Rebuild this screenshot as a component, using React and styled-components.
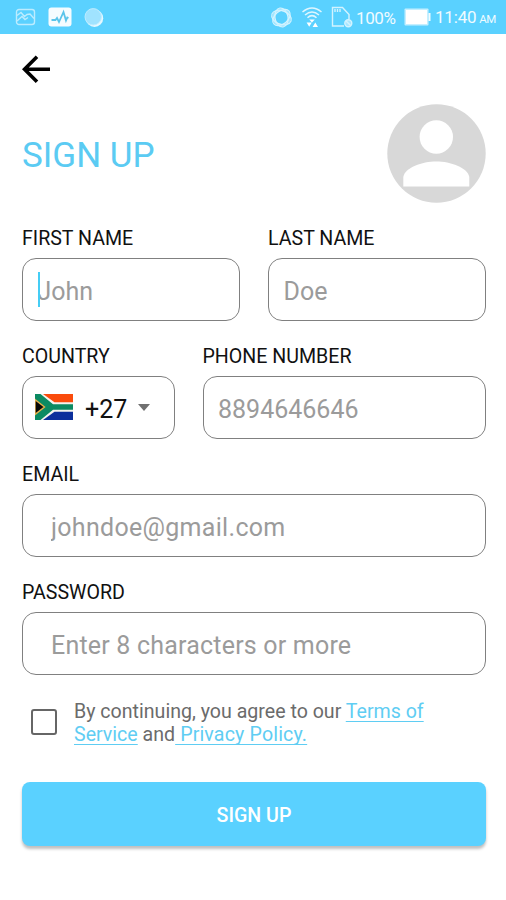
import React, {useState} from "react";
import styled, {createGlobalStyle} from "styled-components";

const GlobalStyle = createGlobalStyle`
  * {
    box-sizing: border-box;
  }

  body {
    margin: 0;
    background-color: #fff;
    font-family: Roboto, "Liberation Sans", sans-serif;
  }
`;

const Screen = styled.div`
  width: 506px;
  height: 900px;
  background-color: #fff;
  overflow: hidden;
`;

const StatusBar = styled.div`
  height: 34px;
  padding: 0 9px 0 15px;
  display: flex;
  align-items: center;
  justify-content: space-between;
  background-color: #5ad1ff;
  color: #f0fbff;
`;

const StatusGroup = styled.div`
  display: flex;
  align-items: center;
  gap: ${({$gap}) => $gap || 0}px;

  svg {
    display: block;
    flex: none;
  }
`;

const StatusText = styled.span`
  width: ${({$width}) => $width}px;
  margin-left: ${({$left}) => $left || 0}px;
  padding-top: 2px;
  font-size: 17px;
  line-height: 32px;
  letter-spacing: ${({$spacing}) => $spacing || 0}px;
  white-space: nowrap;
`;

const Meridiem = styled.span`
  font-size: 11.5px;
  margin-left: 3px;
  letter-spacing: -0.6px;
`;

const Page = styled.div`
  padding: 19px 20px 0 22px;
`;

const BackButton = styled.button`
  display: block;
  width: 32px;
  height: 32px;
  padding: 0;
  border: none;
  background: none;
  cursor: pointer;
`;

const Header = styled.div`
  display: flex;
  align-items: center;
  justify-content: space-between;
  height: 99px;
  margin-top: 19px;
`;

const Title = styled.h1`
  margin: 5px 0 0;
  color: #5bcbf3;
  font-size: 35px;
  font-weight: 400;
  line-height: 42px;
`;

const Form = styled.form`
  margin-top: 24px;
`;

const Row = styled.div`
  display: flex;
  gap: 28px;
`;

const Field = styled.div`
  width: ${({$width}) => $width || 464}px;
  height: 118.1px;
`;

const Label = styled.label`
  display: block;
  height: 31px;
  color: #111;
  font-size: 19.6px;
  line-height: 24px;
  white-space: nowrap;
`;

const Box = styled.div`
  position: relative;
  display: flex;
  align-items: center;
  height: 63px;
  padding: 0 ${({$pad}) => $pad || 14.5}px;
  border: 1px solid #808080;
  border-radius: 14px;
`;

const Input = styled.input`
  width: 100%;
  padding: 3px 0 0;
  border: none;
  outline: none;
  background: transparent;
  color: #111;
  font-family: inherit;
  font-size: 25px;
  letter-spacing: ${({$spacing}) => $spacing || 0}px;

  &::placeholder {
    color: #9b9b9b;
    opacity: 1;
  }
`;

const Caret = styled.span`
  position: absolute;
  left: 15px;
  top: 13px;
  width: 2px;
  height: 35px;
  background-color: #45cdf5;
`;

const DialCode = styled.span`
  margin-left: 12px;
  padding-top: 3px;
  color: #111;
  font-size: 25px;
`;

const DropArrow = styled.span`
  margin: 0 0 0 11px;
  border-left: 6.5px solid transparent;
  border-right: 6.5px solid transparent;
  border-top: 7px solid #707070;
`;

const Consent = styled.div`
  display: flex;
  align-items: center;
  height: 50px;
  margin-top: -2px;
  padding-left: 9px;
`;

const CheckBox = styled.button`
  flex: none;
  width: 26px;
  height: 26px;
  margin-top: -1px;
  padding: 0;
  border: 2px solid #666;
  border-radius: 3px;
  background-color: ${({$checked}) => ($checked ? "#5ad1ff" : "#fff")};
  cursor: pointer;
`;

const ConsentText = styled.p`
  margin: 2px 0 0 17px;
  color: #6b6b6b;
  font-size: 19.6px;
  line-height: 23px;
  white-space: nowrap;
`;

const Link = styled.a`
  color: #5fcdf3;
  text-decoration: underline;
  text-decoration-thickness: 1px;
  text-underline-offset: 3px;
  text-decoration-skip-ink: none;
  letter-spacing: ${({$spacing}) => $spacing || 0}px;
  white-space: pre;
`;

const SubmitButton = styled.button`
  display: block;
  width: 464px;
  height: 64px;
  margin-top: 34.3px;
  padding: 3px 0 0;
  border: none;
  border-radius: 8px;
  background-color: #5ad1ff;
  color: #fff;
  font-family: inherit;
  font-size: 19.6px;
  font-weight: 500;
  box-shadow: 0 3px 3px rgba(0, 0, 0, 0.25);
  cursor: pointer;
`;

const PictureIcon = () => (
    <svg width="21" height="18" viewBox="0 0 21 18" fill="none" stroke="#bcecff" strokeWidth="1.4">
        <rect x="1.5" y="1.5" width="18" height="15" rx="2.5"/>
        <path d="M2 7.5 L6 4.5 L9.5 8.5 L12 6.5 L15 6 L19 10.5 M2 13 L7 8.5 L10 11.5 L13 9.5"/>
    </svg>
);

const PulseIcon = () => (
    <svg width="24" height="20" viewBox="0 0 24 20">
        <rect x="0.5" y="0.5" width="23" height="19" rx="3" fill="#f5fcff"/>
        <path d="M3.5 13 H7.5 L9 11 L11 15 L15.5 5 L18 13.5 L19.3 10.5 L20.5 11" fill="none" stroke="#5ac4ea" strokeWidth="1.8"/>
    </svg>
);

const BubbleIcon = () => (
    <svg width="21" height="21" viewBox="0 0 21 21">
        <circle cx="10.5" cy="11.2" r="8.7" fill="#e6f8ff"/>
        <circle cx="9.2" cy="9.8" r="8.2" fill="#a0e3ff" stroke="#bdecff" strokeWidth="1"/>
    </svg>
);

const RingIcon = () => (
    <svg width="23" height="21" viewBox="0 0 23 21" fill="none" stroke="#d3f3ff" strokeWidth="1.1">
        <ellipse cx="11.5" cy="10.5" rx="10.2" ry="6.8" transform="rotate(20 11.5 10.5)"/>
        <ellipse cx="11.5" cy="10.5" rx="10" ry="6.5" transform="rotate(-40 11.5 10.5)"/>
        <ellipse cx="11.5" cy="10.5" rx="9.6" ry="6.5" transform="rotate(80 11.5 10.5)"/>
        <circle cx="11.5" cy="10.5" r="7.9" strokeWidth="3.2" opacity="0.6"/>
    </svg>
);

const WifiIcon = () => (
    <svg width="22" height="22" viewBox="0 0 22 22" fill="none" stroke="#dff6ff" strokeWidth="1.5">
        <path d="M1.5 6 Q11 -2 20.5 6"/>
        <path d="M4 9 Q11 3 18 9"/>
        <path d="M6.5 11.7 Q11 7.5 15.5 11.7"/>
        <path d="M8.2 13.5 H13.8 L11 16.5 Z" fill="#fff" stroke="none"/>
        <path d="M5.6 16.5 H10.8 L8.2 20.8 Z M11.6 21 L14.3 16.5 L17 21 Z" fill="#fff" stroke="none"/>
    </svg>
);

const SimIcon = () => (
    <svg width="22" height="22" viewBox="0 0 22 22" fill="none" stroke="#d3f3ff" strokeWidth="1.4">
        <path d="M13 20 H1.5 V1.5 H11.5 L18 8.5 V13"/>
        <path d="M4 3 V6 M6.5 3 V6 M9 3 V6"/>
        <circle cx="17.3" cy="17.3" r="3.5" fill="#a9e6ff"/>
        <path d="M15 15 L19.6 19.6"/>
    </svg>
);

const BatteryIcon = () => (
    <svg width="27" height="18" viewBox="0 0 27 18">
        <rect x="0.5" y="0.5" width="24" height="17" rx="1" fill="#c5efff"/>
        <rect x="2" y="2" width="21" height="14" fill="#fff"/>
        <rect x="24.5" y="5" width="2" height="8" fill="#f2fbff"/>
    </svg>
);

const BackIcon = () => (
    <svg width="32" height="32" viewBox="0 0 32 32" fill="none" stroke="#000" strokeWidth="3.6">
        <path d="M28 16.3 H3 M15 3.8 L2.5 16.3 L15 28.8"/>
    </svg>
);

const Avatar = () => (
    <svg width="99" height="99" viewBox="0 0 99 99">
        <circle cx="49.5" cy="49.5" r="49.2" fill="#d8d8d8"/>
        <circle cx="49.3" cy="33" r="16.7" fill="#fff"/>
        <path d="M16.3 82.5 V73 C18 63.5 35 57.5 49.3 57.5 C63.5 57.5 80.5 63.5 82.3 73 V82.5 Z" fill="#fff"/>
    </svg>
);

const FlagSvg = styled.svg`
  flex: none;
  margin-bottom: 2px;
`;

const Flag = () => (
    <FlagSvg width="38" height="26" viewBox="0 0 38 26">
        <rect width="38" height="26" fill="#f3f3ee"/>
        <path d="M8 0 H38 V8.3 H19.5 Z" fill="#fa4b0c"/>
        <path d="M8 26 H38 V17.7 H19.5 Z" fill="#0c2f9c"/>
        <path d="M0 0 H5.5 L18 10.2 H38 V15.8 H18 L5.5 26 H0 Z" fill="#0b8a62"/>
        <path d="M0 5.5 L9.5 13 L0 20.5 Z" fill="#080808" stroke="#e5b04c" strokeWidth="1.4"/>
    </FlagSvg>
);

const TextField = ({id, label, width, pad, spacing, placeholder, focused}) => (
    <Field $width={width}>
        <Label htmlFor={id}>{label}</Label>
        <Box $pad={pad}>
            <Input id={id} placeholder={placeholder} $spacing={spacing}/>
            {focused && <Caret/>}
        </Box>
    </Field>
);

const App = () => {
    const [agreed, setAgreed] = useState(false);

    const handleSubmit = (e) => {
        e.preventDefault();
    };

    return (
        <>
            <GlobalStyle/>
            <Screen>
                <StatusBar>
                    <StatusGroup $gap={12}>
                        <PictureIcon/>
                        <PulseIcon/>
                        <BubbleIcon/>
                    </StatusGroup>
                    <StatusGroup>
                        <StatusGroup $gap={8}>
                            <RingIcon/>
                            <WifiIcon/>
                            <SimIcon/>
                        </StatusGroup>
                        <StatusText $left={3} $width={48} $spacing={-0.4}>100%</StatusText>
                        <BatteryIcon/>
                        <StatusText $left={4} $width={62} $spacing={-0.2}>
                            11:40<Meridiem>AM</Meridiem>
                        </StatusText>
                    </StatusGroup>
                </StatusBar>
                <Page>
                    <BackButton aria-label="Back"><BackIcon/></BackButton>
                    <Header>
                        <Title>SIGN UP</Title>
                        <Avatar/>
                    </Header>
                    <Form onSubmit={handleSubmit}>
                        <Row>
                            <TextField id="first" label="FIRST NAME" width={218} placeholder="John" focused/>
                            <TextField id="last" label="LAST NAME" width={218} placeholder="Doe"/>
                        </Row>
                        <Row>
                            <Field $width={152.5}>
                                <Label>COUNTRY</Label>
                                <Box $pad={12}>
                                    <Flag/>
                                    <DialCode>+27</DialCode>
                                    <DropArrow/>
                                </Box>
                            </Field>
                            <TextField id="phone" label="PHONE NUMBER" width={283.5} placeholder="8894646646"/>
                        </Row>
                        <TextField id="email" label="EMAIL" pad={28} spacing={0.3} placeholder="johndoe@gmail.com"/>
                        <TextField id="password" label="PASSWORD" pad={28} spacing={0.2} placeholder="Enter 8 characters or more"/>
                        <Consent>
                            <CheckBox
                                type="button"
                                role="checkbox"
                                aria-checked={agreed}
                                $checked={agreed}
                                onClick={() => setAgreed(!agreed)}
                            />
                            <ConsentText>
                                By continuing, you agree to our <Link>Terms of</Link><br/>
                                <Link>Service</Link> and<Link $spacing={0.15}> Privacy Policy.</Link>
                            </ConsentText>
                        </Consent>
                        <SubmitButton type="submit">SIGN UP</SubmitButton>
                    </Form>
                </Page>
            </Screen>
        </>
    );
};

export default App;
